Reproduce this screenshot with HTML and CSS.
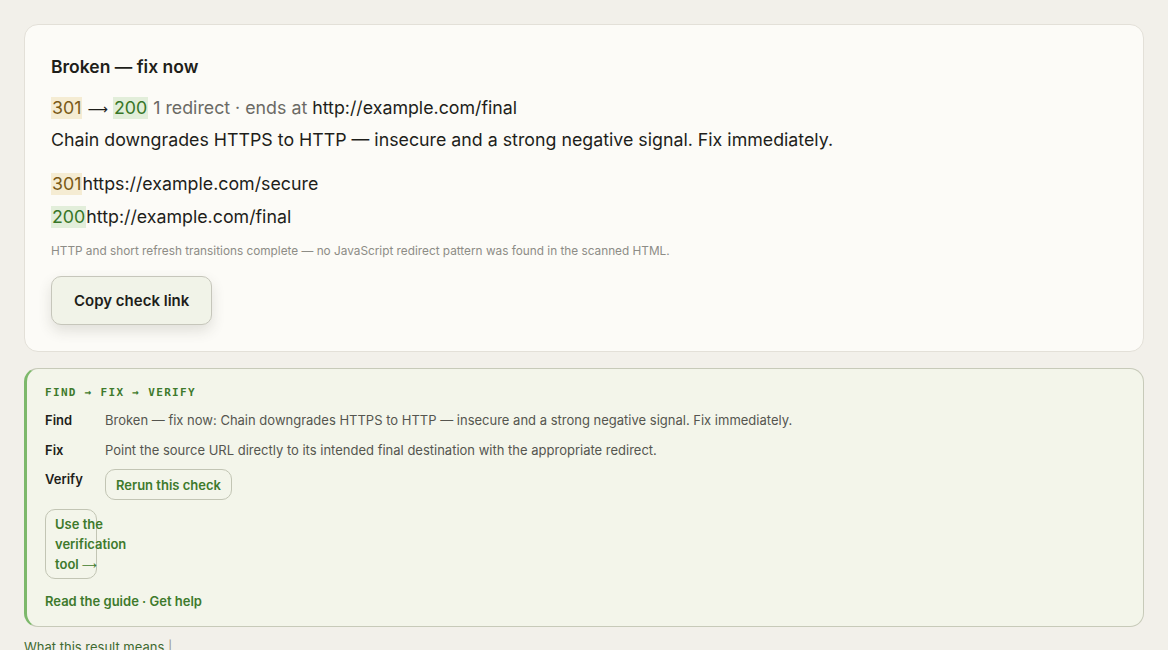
FILE: index.html
```html
<!DOCTYPE html>
<html lang="en">
<head>
    <meta charset="UTF-8">
    <meta name="viewport" content="width=device-width, initial-scale=1.0">
    <title>Redirect check</title>
    <link rel="stylesheet" href="styles.css">
</head>
<body>
<div class="page">
    <section class="result-card">
        <h2 class="verdict">Broken — fix now</h2>
        <p class="summary">
            <span class="code code-redirect">301</span> <span class="arrow">⟶</span> <span class="code code-ok">200</span>
            <span class="muted">1 redirect · ends at</span> http://example.com/final
        </p>
        <p class="reason">Chain downgrades HTTPS to HTTP — insecure and a strong negative signal. Fix immediately.</p>

        <ul class="chain">
            <li><span class="code code-redirect">301</span>https://example.com/secure</li>
            <li><span class="code code-ok">200</span>http://example.com/final</li>
        </ul>

        <p class="note">HTTP and short refresh transitions complete — no JavaScript redirect pattern was found in the scanned HTML.</p>

        <button class="copy-btn" type="button">Copy check link</button>
    </section>

    <section class="steps-card">
        <div class="steps-title">FIND → FIX → VERIFY</div>
        <div class="step step-find">
            <span class="step-label">Find</span>
            <span class="step-text">Broken — fix now: Chain downgrades HTTPS to HTTP — insecure and a strong negative signal. Fix immediately.</span>
        </div>
        <div class="step">
            <span class="step-label">Fix</span>
            <span class="step-text">Point the source URL directly to its intended final destination with the appropriate redirect.</span>
        </div>
        <div class="step step-verify">
            <span class="step-label">Verify</span>
            <button class="rerun-btn" type="button">Rerun this check</button>
        </div>
        <a class="tool-link" href="#">Use the<br>verification<br>tool <span class="arrow">⟶</span></a>
        <div class="help-links">
            <a href="#">Read the guide</a> · <a href="#">Get help</a>
        </div>
    </section>

    <div class="more">What this result means <span class="bar">|</span></div>
</div>
</body>
</html>
```

FILE: styles.css
```css
body {
    margin: 0;
    background: #f2f0ea;
    font-family: Inter, "Liberation Sans", sans-serif;
    color: #1e1e1a;
}
.page {
    padding: 24px 24px 0;
}
/* long thin arrow, Inter's own is too short */
.arrow {
    font-family: "DejaVu Sans", sans-serif;
    font-size: 0.8em;
    font-weight: 400;
    line-height: 0;
}

/* result card */
.result-card {
    background: #fcfbf7;
    border: 1px solid #e3e0d8;
    border-radius: 14px;
    padding: 29px 26px 26px;
}
.verdict {
    margin: 0;
    font-size: 17.5px;
    line-height: 26px;
    font-weight: 600;
}
.summary,
.reason,
.chain li {
    font-size: 17.8px;
    line-height: 27px;
}
.summary {
    margin: 14px 0 0;
}
.reason {
    margin: 5px 0 0;
}
.muted {
    color: #6b6a65;
}
.code {
    display: inline-block;
    line-height: 22px;
    padding: 0 1px;
}
.code-redirect {
    background: #f5ecd3;
    color: #7a5a17;
}
.code-ok {
    background: #e2eeda;
    color: #387628;
}
.chain {
    list-style: none;
    margin: 17px 0 0;
    padding: 0;
}
.chain li {
    margin-bottom: 6px;
}
.chain li:last-child {
    margin-bottom: 0;
}
.note {
    margin: 13px 0 0;
    font-size: 11.8px;
    line-height: 17px;
    color: #8d8c86;
}
.copy-btn {
    margin-top: 16px;
    height: 49px;
    padding: 0 22px;
    font-family: inherit;
    font-size: 15px;
    font-weight: 600;
    color: #1e1e1a;
    background: #f1f3e8;
    border: 1px solid #c6c6bb;
    border-radius: 10px;
    box-shadow: 0 6px 14px rgba(60, 60, 40, 0.14);
}

/* find / fix / verify */
.steps-card {
    margin-top: 16px;
    background: #f3f5ea;
    border: 1px solid #c7cab9;
    border-left: 3px solid #7db86b;
    border-radius: 14px;
    padding: 17px 18px 15px;
    font-size: 13px;
}
.steps-title {
    font-family: "DejaVu Sans Mono", "Liberation Mono", monospace;
    font-size: 11px;
    font-weight: 700;
    line-height: 14px;
    letter-spacing: 0.12em;
    color: #3e7a2c;
}
.step {
    display: flex;
    align-items: flex-start;
    margin-top: 10px;
    line-height: 20px;
}
.step-find {
    margin-top: 10px;
}
.step-verify {
    margin-top: 9px;
}
.step-label {
    width: 60px;
    flex-shrink: 0;
    font-weight: 600;
    color: #1e1e1a;
}
.step-text {
    color: #55554f;
}
.rerun-btn {
    height: 31px;
    padding: 0 10px;
    font-family: inherit;
    font-size: 13px;
    font-weight: 600;
    color: #3e7a2c;
    background: transparent;
    border: 1px solid #c2c5b4;
    border-radius: 10px;
}
.tool-link {
    display: block;
    width: 52px;
    box-sizing: border-box;
    margin-top: 9px;
    padding: 4px 9px;
    line-height: 20px;
    white-space: nowrap;
    font-weight: 600;
    color: #3e7a2c;
    text-decoration: none;
    border: 1px solid #c2c5b4;
    border-radius: 10px;
}
.help-links {
    margin-top: 12px;
    line-height: 20px;
    font-weight: 600;
    color: #3e7a2c;
}
.help-links a {
    color: #3e7a2c;
    text-decoration: none;
}
.more {
    margin-top: 10px;
    font-size: 13px;
    line-height: 20px;
    color: #3e6a30;
}
.more .bar {
    color: #9a9a92;
}
```
